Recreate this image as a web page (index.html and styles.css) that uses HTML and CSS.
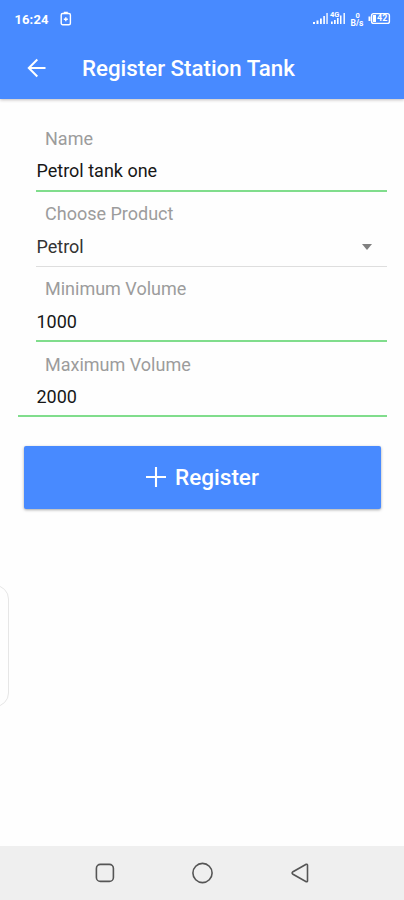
FILE: index.html
```html
<!DOCTYPE html>
<html lang="en">
<head>
<meta charset="utf-8">
<title>Register Station Tank</title>
<link rel="stylesheet" href="styles.css">
</head>
<body>
<div class="screen">
  <header class="header">
    <div class="status">
      <span class="clock">16:24</span>
      <svg class="saver" width="12" height="16" viewBox="0 0 12 16" fill="none" stroke="#fff" stroke-width="1.4"><rect x="1.2" y="2.5" width="9.2" height="11.3" rx="1.5"/><path d="M3.8 1.4h4M5.8 6.2v4M3.8 8.2H7.8"/></svg>
      <svg class="signals" width="80" height="20" viewBox="0 0 80 20">
        <g fill="#fff">
          <path d="M1 13h2v2H1zM4.5 11.5h2V15h-2zM8 9.5h1.8V15H8zM11.3 7h1.6v8h-1.6zM14.4 4h1.3v11h-1.3z"/>
          <path d="M19 12.5h1.7V15H19zM22 11h1.7v4H22zM25 9h1.6v6H25zM28 6.5h1.5V15H28zM31.5 4h1.4v11h-1.4z"/>
          <text x="18" y="8" class="tiny">4G</text>
          <text x="43.5" y="8.5" class="tiny">0</text>
          <text x="38.5" y="17" class="tiny unit">B/s</text>
          <path d="M56.5 7.5h2v4.5h-2z"/>
        </g>
        <rect x="59.6" y="4.6" width="17.8" height="9.8" rx="2" fill="none" stroke="#fff" stroke-width="1.4"/>
        <rect x="61" y="6" width="3" height="7" fill="#fff"/>
        <text x="65" y="12.3" class="level">42</text>
      </svg>
    </div>
    <div class="toolbar">
      <svg class="back" width="20" height="20" viewBox="0 0 20 20" fill="none" stroke="#fff" stroke-width="2"><path d="M18.5 10H2.3M10.3 1.5 1.8 10l8.5 8.5"/></svg>
      <h1 class="title">Register Station Tank</h1>
    </div>
  </header>
  <main class="content">
    <div class="field"><span class="label">Name</span><span class="value">Petrol tank one</span></div>
    <div class="field plain"><span class="label">Choose Product</span><span class="value choice">Petrol<i class="caret"></i></span></div>
    <div class="field"><span class="label">Minimum Volume</span><span class="value">1000</span></div>
    <div class="field last"><span class="label">Maximum Volume</span><span class="value">2000</span></div>
    <button class="register"><svg width="20" height="20" viewBox="0 0 20 20" fill="none" stroke="#fff" stroke-width="2.1"><path d="M10 0v20M0 10h20"/></svg><span>Register</span></button>
  </main>
  <div class="edge-handle"></div>
  <nav class="nav">
    <svg width="20" height="20" viewBox="0 0 20 20"><rect x="1.4" y="1.4" width="17" height="17" rx="4"/></svg>
    <svg width="22" height="22" viewBox="0 0 22 22"><circle cx="10.5" cy="11" r="9.6"/></svg>
    <svg width="20" height="22" viewBox="0 0 20 22"><path d="M16.2 2.3 3 9.7q-1.8 1.3 0 2.6l13.2 7.4q1.3.4 1.3-1V3.3q0-1.4-1.3-1z"/></svg>
  </nav>
</div>
</body>
</html>
```
FILE: styles.css
```css
* { box-sizing: border-box; }
body { margin: 0; background: #fefefe; font-family: Roboto, sans-serif; }
.screen { position: relative; display: flex; flex-direction: column; height: 900px; overflow: hidden; }
.header { height: 99px; background: #488aff; color: #fff; box-shadow: 0 1px 3px rgba(60, 40, 40, .3); }
.status { display: flex; align-items: center; height: 38px; padding: 0 12px 0 14.5px; }
.clock { width: 34.5px; font-size: 13px; font-weight: 700; letter-spacing: .1px; }
.saver { margin-left: 11px; }
.signals { margin-left: auto; }
.tiny { font-size: 7.5px; font-weight: 700; }
.unit { font-size: 8.5px; }
.level { font-size: 9px; font-weight: 700; fill: #fff; }
.toolbar { display: flex; align-items: center; height: 60px; padding-left: 27px; }
.back { margin-right: 35px; }
.title { margin: 0; font-size: 22.3px; font-weight: 500; white-space: nowrap; }
.content { flex: 1; padding-top: 28px; }
.field { display: flex; flex-direction: column; height: 75.3px; margin: 0 17px 0 36px; border-bottom: 2px solid #80dd8c; }
.field:first-child { height: 64.5px; }
.plain { border-bottom: 1px solid #dedede; }
.last { margin-left: 18px; padding-left: 18px; }
.label { margin-left: 9px; color: #9c9c9c; font-size: 18px; line-height: 24px; }
.field + .field .label { margin-top: 10.7px; }
.value { padding-left: .5px; color: #171717; font-size: 18px; line-height: 24px; margin-top: 8.4px; }
.choice { display: flex; align-items: center; justify-content: space-between; color: #333; }
.caret { margin-right: 15px; border: 5.5px solid transparent; border-top: 6px solid #808080; border-bottom: 0; }
.register { display: flex; align-items: center; justify-content: center; gap: 9px; width: 357px; height: 63px; margin: 29px 0 0 24px; padding: 0 0 1px; border: 0; border-radius: 2px; background: #488aff; color: #fff; font: 500 22.5px/26px Roboto, sans-serif; box-shadow: 0 1px 3px rgba(0, 0, 0, .35); }
.edge-handle { position: absolute; left: -20px; top: 585px; width: 29px; height: 122px; border: 1px solid #e6e6e6; border-radius: 14px; }
.nav { display: flex; align-items: center; justify-content: space-between; height: 54px; padding: 0 94px 0 95px; background: #efefef; }
.nav svg { fill: none; stroke: #555; stroke-width: 1.6; }
```
